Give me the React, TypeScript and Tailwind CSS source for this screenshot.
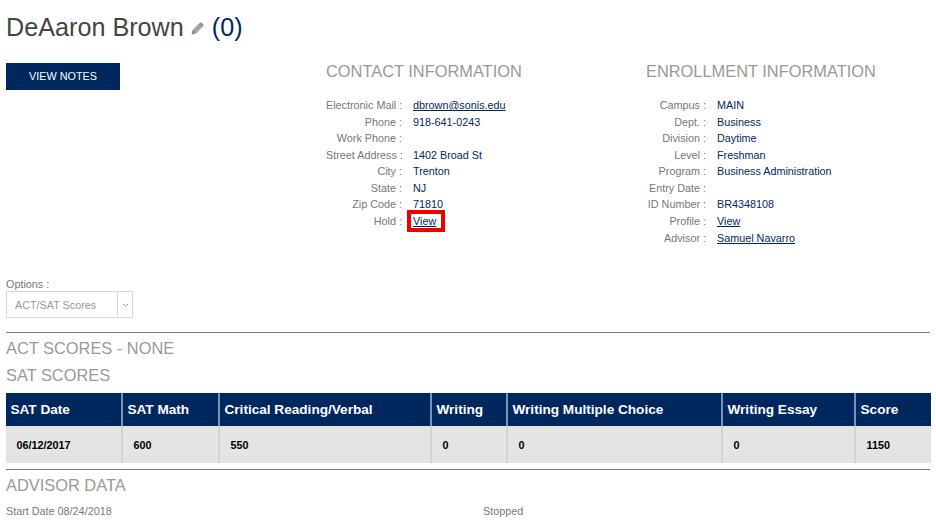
import React from "react";

const contact: [string, React.ReactNode][] = [
  ["Electronic Mail :", <a className="underline">dbrown@sonis.edu</a>],
  ["Phone :", "918-641-0243"],
  ["Work Phone :", ""],
  ["Street Address :", "1402 Broad St"],
  ["City :", "Trenton"],
  ["State :", "NJ"],
  ["Zip Code :", "71810"],
  [
    "Hold :",
    <a className="-my-[3px] -ml-[6px] inline-block border-[4px] border-[#ee0000] pl-[2px] pr-[5px] leading-[14px] underline">
      View
    </a>,
  ],
];

const enrollment: [string, React.ReactNode][] = [
  ["Campus :", "MAIN"],
  ["Dept. :", "Business"],
  ["Division :", "Daytime"],
  ["Level :", "Freshman"],
  ["Program :", "Business Administration"],
  ["Entry Date :", ""],
  ["ID Number :", "BR4348108"],
  ["Profile :", <a className="underline">View</a>],
  ["Advisor :", <a className="underline">Samuel Navarro</a>],
];

const columns = [
  { name: "SAT Date", value: "06/12/2017", width: "w-[117px]" },
  { name: "SAT Math", value: "600", width: "w-[97px]" },
  { name: "Critical Reading/Verbal", value: "550", width: "w-[212px]" },
  { name: "Writing", value: "0", width: "w-[76px]" },
  { name: "Writing Multiple Choice", value: "0", width: "w-[215px]" },
  { name: "Writing Essay", value: "0", width: "w-[133px]" },
  { name: "Score", value: "1150", width: "w-[75px]" },
];

function InfoList({ rows, labelWidth }: { rows: [string, React.ReactNode][]; labelWidth: string }) {
  return (
    <div className="mt-[17.15px] text-[10.8px] leading-[16.55px]">
      {rows.map(([label, value]) => (
        <div key={label} className="flex h-[16.55px]">
          <div className={`${labelWidth} shrink-0 whitespace-nowrap text-right text-[#777777]`}>{label}</div>
          <div className="ml-[11px] text-[#00285f]">{value}</div>
        </div>
      ))}
    </div>
  );
}

export default function App() {
  return (
    <div className="h-[528px] w-[936px] overflow-hidden bg-white px-[6px] font-['Liberation_Sans',Arial,sans-serif]">
      <h1 className="flex h-[56px] items-center text-[25.2px] text-[#444444]">
        DeAaron Brown
        <svg className="ml-[7px] mr-[8px] mt-[1px] h-[13px] w-[13px]" viewBox="0 0 13 13">
          <path
            d="M8.4 1.2a2 2 0 0 1 2.8 0l.6.6a2 2 0 0 1 0 2.8L5 11.4l-3.6 1-.8-.8 1-3.6z"
            fill="#8f8f8f"
          />
          <path d="M3 8.6 9 2.6M4.6 10.2 10.6 4.2" stroke="#cfcfcf" strokeWidth="1" />
        </svg>
        <span className="text-[#00285f]">(0)</span>
      </h1>

      <div className="flex h-[222px]">
        <div className="w-[320px] pt-[7px]">
          <button className="h-[27px] w-[114px] bg-[#00285f] text-[10.8px] text-white">VIEW NOTES</button>
        </div>
        <div className="w-[320px]">
          <h2 className="pt-[6px] text-[16.4px] leading-[18px] text-[#999999]">CONTACT INFORMATION</h2>
          <InfoList rows={contact} labelWidth="w-[76px]" />
        </div>
        <div>
          <h2 className="pt-[6px] text-[16.4px] leading-[18px] text-[#999999]">ENROLLMENT INFORMATION</h2>
          <InfoList rows={enrollment} labelWidth="w-[60px]" />
        </div>
      </div>

      <div className="text-[10.8px] leading-[12px] text-[#777777]">Options :</div>
      <div className="mt-[1px] flex h-[27px] w-[127px] border border-[#d8d8d8] text-[10.8px] text-[#999999]">
        <div className="flex flex-1 items-center pl-[8px] pt-px">ACT/SAT Scores</div>
        <div className="flex w-[15px] items-center justify-center border-l border-[#d8d8d8]">
          <svg className="h-[4px] w-[7px]" viewBox="0 0 7 4" fill="none">
            <path d="M1 1l2.5 2L6 1" stroke="#999999" strokeWidth="1" />
          </svg>
        </div>
      </div>

      <div className="mt-[14px] h-px w-[924px] bg-[#777777]" />
      <h2 className="mt-[6px] text-[16.4px] leading-[18px] text-[#999999]">ACT SCORES - NONE</h2>
      <h2 className="mt-[9px] text-[16.4px] leading-[18px] text-[#999999]">SAT SCORES</h2>

      <div className="mt-[9px] flex w-[925px] text-[13.6px]">
        {columns.map((c, i) => (
          <div key={c.name} className={c.width}>
            <div
              className={`flex h-[33px] items-center bg-[#00285f] pl-[4.5px] pt-px font-bold text-white ${
                i < columns.length - 1 ? "border-r-2 border-[#7d91b0]" : ""
              }`}
            >
              {c.name}
            </div>
            <div
              className={`flex h-[37px] items-center bg-[#e4e4e4] pl-[10.5px] pt-[2px] text-[10.8px] font-bold text-black ${
                i < columns.length - 1 ? "border-r-2 border-[#d2d2d2]" : ""
              }`}
            >
              {c.value}
            </div>
          </div>
        ))}
      </div>

      <div className="mt-[6px] h-px w-[924px] bg-[#777777]" />
      <h2 className="mt-[6px] text-[16.4px] leading-[18px] text-[#999999]">ADVISOR DATA</h2>
      <div className="mt-[11px] flex text-[10.8px] leading-[12px] text-[#777777]">
        <div className="w-[477px]">Start Date 08/24/2018</div>
        <div>Stopped</div>
      </div>
    </div>
  );
}
